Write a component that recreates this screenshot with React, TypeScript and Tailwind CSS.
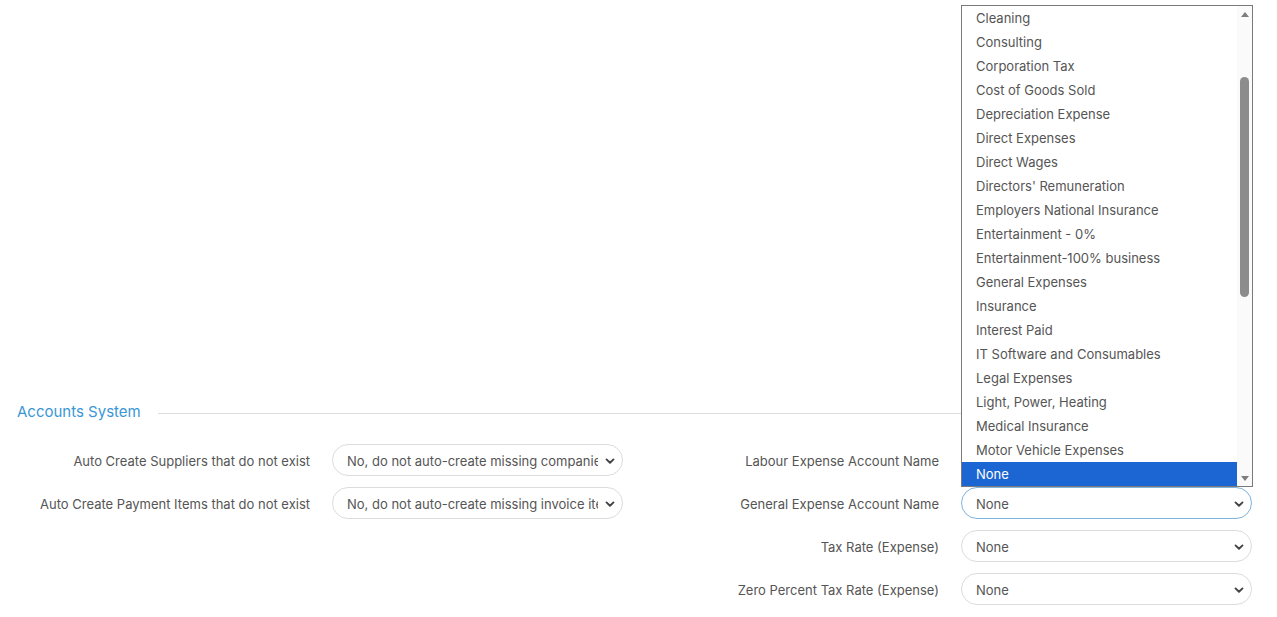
import React from "react";

const options = [
  "Cleaning",
  "Consulting",
  "Corporation Tax",
  "Cost of Goods Sold",
  "Depreciation Expense",
  "Direct Expenses",
  "Direct Wages",
  "Directors' Remuneration",
  "Employers National Insurance",
  "Entertainment - 0%",
  "Entertainment-100% business",
  "General Expenses",
  "Insurance",
  "Interest Paid",
  "IT Software and Consumables",
  "Legal Expenses",
  "Light, Power, Heating",
  "Medical Insurance",
  "Motor Vehicle Expenses",
  "None",
];

function Chevron() {
  return (
    <svg width="10" height="10" viewBox="0 0 10 10" className="shrink-0">
      <path d="M1.5 3.4 L5 6.8 L8.5 3.4" fill="none" stroke="#444" strokeWidth="1.9" strokeLinecap="round" strokeLinejoin="round" />
    </svg>
  );
}

function FakeSelect({ value, focused }: { value: string; focused?: boolean }) {
  return (
    <div
      className={
        "w-[291px] h-[32px] rounded-full border bg-white flex items-center pl-[14px] pr-[7px] " +
        (focused ? "border-[#7fb2dd]" : "border-[#dcdcdc]")
      }
    >
      <div className="flex-1 overflow-hidden whitespace-nowrap text-[13px] text-[#555] pt-[3px]">{value}</div>
      <div className="w-[17px] flex justify-end pt-[2px]">
        <Chevron />
      </div>
    </div>
  );
}

function Row({ label, value, labelW, focused }: { label: string; value: string; labelW: string; focused?: boolean }) {
  return (
    <div className="flex items-center h-[32px]">
      <div className={labelW + " text-right text-[13px] text-[#555] pt-[4px]"}>{label}</div>
      <div className="ml-[22px]">
        <FakeSelect value={value} focused={focused} />
      </div>
    </div>
  );
}

export default function App() {
  return (
    <div
      className="relative w-[1277px] h-[617px] bg-white overflow-hidden"
      style={{ fontFamily: "Inter, 'Noto Sans', sans-serif" }}
    >
      <div className="h-[402px]" />
      <div className="flex items-center h-5 pl-[17px]">
        <span className="text-[15px] text-[#3a97d4]">Accounts System</span>
        <div className="ml-[17px] w-[803px] h-px bg-[#dedede] mt-[2px]" />
      </div>
      <div className="flex mt-[22px]">
        <div className="flex flex-col gap-[11px]">
          <Row label="Auto Create Suppliers that do not exist" value="No, do not auto-create missing companies" labelW="w-[310px]" />
          <Row label="Auto Create Payment Items that do not exist" value="No, do not auto-create missing invoice items" labelW="w-[310px]" />
        </div>
        <div className="flex flex-col gap-[11px] ml-[5px]">
          <Row label="Labour Expense Account Name" value="" labelW="w-[311px]" />
          <Row label="General Expense Account Name" value="None" labelW="w-[311px]" focused />
          <Row label="Tax Rate (Expense)" value="None" labelW="w-[311px]" />
          <Row label="Zero Percent Tax Rate (Expense)" value="None" labelW="w-[311px]" />
        </div>
      </div>

      {/* open dropdown list */}
      <div className="absolute left-[961px] top-[5px] w-[292px] h-[482px] border border-[#7a7a7a] bg-white flex">
        <div className="flex-1 flex flex-col">
          {options.map((o) => (
            <div
              key={o}
              className={
                "h-[24px] flex items-center pl-[14px] pt-[2px] text-[13px] " +
                (o === "None" ? "bg-[#1b66d2] text-white" : "text-[#555]")
              }
            >
              {o}
            </div>
          ))}
        </div>
        <div className="w-[15px] bg-[#fafafa] flex flex-col items-center">
          <svg width="10" height="8" viewBox="0 0 10 8" className="mt-[4px]">
            <path d="M1 7 L5 2 L9 7 Z" fill="#7d7d7d" />
          </svg>
          <div className="mt-[59px] w-[9px] h-[220px] rounded-full bg-[#8c8c8c]" />
          <div className="flex-1" />
          <svg width="10" height="8" viewBox="0 0 10 8" className="mb-[3px]">
            <path d="M1 1 L9 1 L5 6 Z" fill="#7d7d7d" />
          </svg>
        </div>
      </div>
    </div>
  );
}
